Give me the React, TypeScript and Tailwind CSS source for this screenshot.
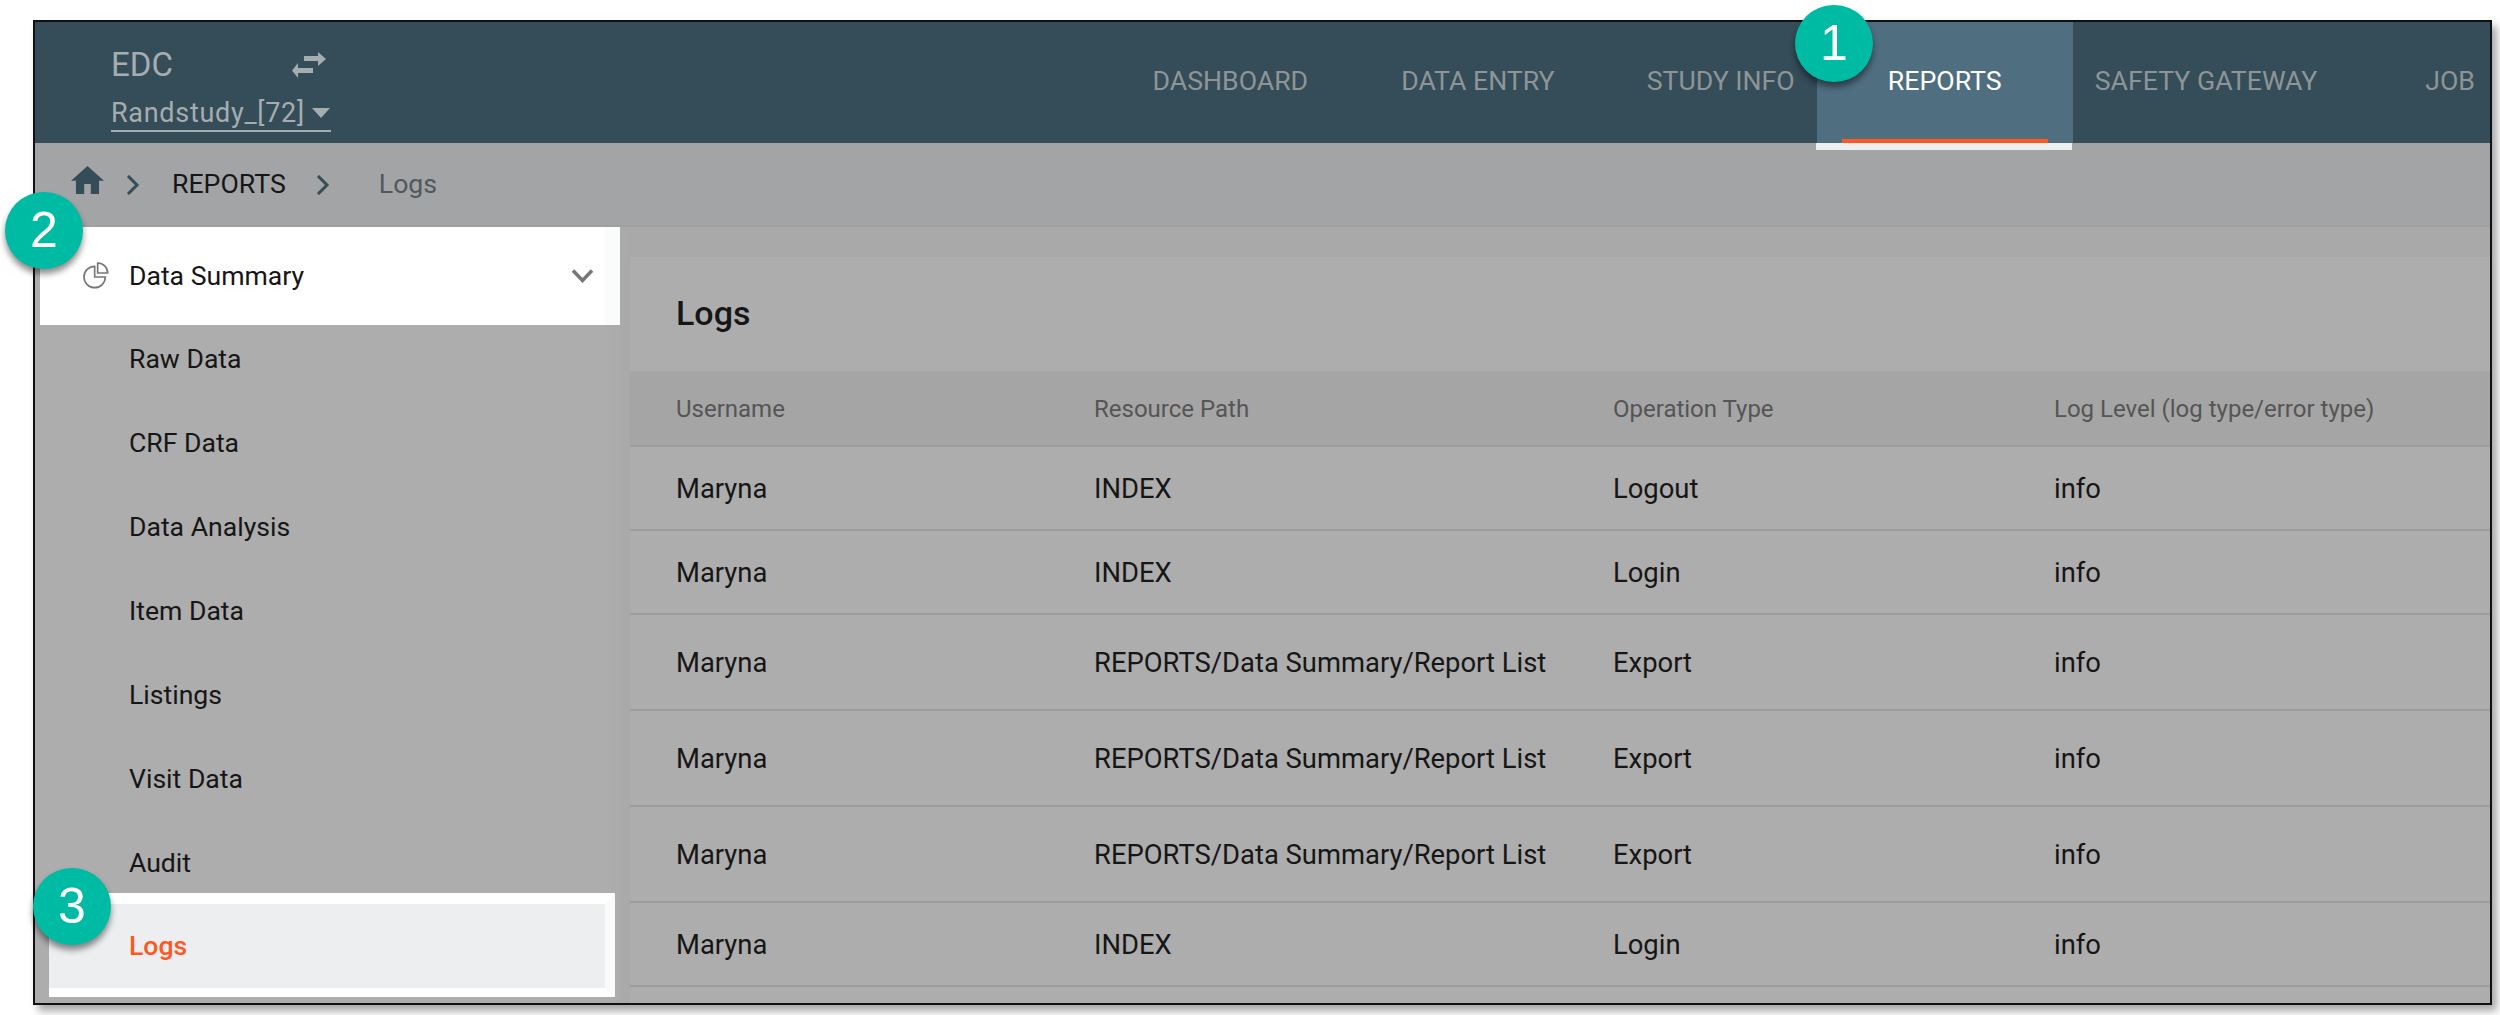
import type { ReactNode } from "react";

const navItems = [
  { label: "DASHBOARD", space: "mr-[93px]" },
  { label: "DATA ENTRY", space: "mr-[92px]" },
  { label: "STUDY INFO", space: "mr-[22px]" },
  { label: "REPORTS", space: "w-[256px] justify-center", active: true },
  { label: "SAFETY GATEWAY", space: "ml-[22px] mr-[108px]" },
  { label: "JOB", space: "mr-[15px]" },
];

const sideItems = ["Raw Data", "CRF Data", "Data Analysis", "Item Data", "Listings", "Visit Data", "Audit"];

const rows = [
  { op: "Logout", path: "INDEX", h: "h-[84px]" },
  { op: "Login", path: "INDEX", h: "h-[84px]" },
  { op: "Export", path: "REPORTS/Data Summary/Report List", h: "h-[96px]" },
  { op: "Export", path: "REPORTS/Data Summary/Report List", h: "h-[96px]" },
  { op: "Export", path: "REPORTS/Data Summary/Report List", h: "h-[96px]" },
  { op: "Login", path: "INDEX", h: "h-[84px]" },
  { op: "", path: "", h: "h-[40px]" },
];

function Badge({ n, className }: { n: number; className: string }) {
  return (
    <div
      className={`absolute z-10 flex h-[77px] w-[78px] items-center justify-center rounded-full bg-[#00bba4] text-[50px] text-white shadow-[0_5px_6px_rgba(0,0,0,0.45)] font-['Liberation_Sans',sans-serif] ${className}`}
    >
      {n}
    </div>
  );
}

function Cell({ className, children }: { className: string; children: ReactNode }) {
  return <div className={`shrink-0 ${className}`}>{children}</div>;
}

function Chevron({ className }: { className: string }) {
  return (
    <svg viewBox="0 0 14 20" className={`h-[20px] w-[14px] ${className}`} fill="none" stroke="#354c59" strokeWidth="3">
      <path d="M2 1l9 9-9 9" />
    </svg>
  );
}

export default function App() {
  return (
    <div className="relative h-[1015px] w-[2500px] overflow-hidden bg-white pt-[20px] pl-[33px] font-['Roboto',sans-serif]">
      <Badge n={1} className="left-[1795px] top-[5px]" />
      <Badge n={2} className="left-[5px] top-[192px]" />
      <Badge n={3} className="left-[33px] top-[868px]" />

      <div className="flex h-[985px] w-[2459px] flex-col overflow-hidden border-2 border-[#111] bg-[#a9a9a9] shadow-[5px_6px_8px_rgba(0,0,0,0.35)]">
        {/* top bar */}
        <header className="flex h-[121px] shrink-0 items-stretch justify-between bg-[#354c59] pl-[76px]">
          <div className="flex flex-col pt-[23px] text-[#a6adb0]">
            <div className="flex w-[217px] items-center justify-between pr-[1px]">
              <span className="text-[33px] leading-[40px]">EDC</span>
              <svg viewBox="0 0 36 28" className="h-[28px] w-[36px]" fill="#a6adb0">
                <path d="M13 5h14V1l8 7-8 7v-5H13z" />
                <path d="M22 17H7v-5l-6 7.500 6 7.500v-5h15z" />
              </svg>
            </div>
            <div className="mt-[11px] flex w-[220px] items-center gap-[7px] border-b-2 border-[#a6adb0] text-[27px] leading-[34px] tracking-[0.7px]">
              <span>Randstudy_[72]</span>
              <svg viewBox="0 0 18 10" className="h-[10px] w-[18px]" fill="#a6adb0">
                <path d="M0 0h18L9 10z" />
              </svg>
            </div>
          </div>
          <nav className="flex items-stretch">
            {navItems.map((item) => (
              <div
                key={item.label}
                className={`relative flex items-start pt-[41px] text-[26.7px] leading-[36px] ${item.space} ${
                  item.active ? "bg-[#4f6e80] text-white" : "text-[#8e9597]"
                }`}
              >
                {item.label}
                {item.active && (
                  <div className="absolute bottom-0 left-[25px] right-[25px] h-[4px] bg-[#ff5722]" />
                )}
              </div>
            ))}
          </nav>
        </header>

        {/* breadcrumb */}
        <div className="relative flex h-[84px] shrink-0 items-center border-b-2 border-[#a0a0a0] bg-[#a3a4a6] pt-[1px] pl-[36px] text-[26.7px]">
          <div className="absolute left-[1781px] top-0 h-[7px] w-[256px] bg-[#edeef0]" />
          <svg viewBox="2 3 20 17" className="-mt-[10px] h-[28px] w-[33px]" fill="#354c59">
            <path d="M10 20v-6h4v6h5v-8h3L12 3 2 12h3v8z" />
          </svg>
          <Chevron className="ml-[22px]" />
          <span className="ml-[32px] text-[#161616]">REPORTS</span>
          <Chevron className="ml-[30px]" />
          <span className="ml-[49px] text-[#52595d]">Logs</span>
        </div>

        <div className="flex min-h-0 flex-1 items-stretch">
          {/* side menu */}
          <aside className="w-[595px] shrink-0 bg-[linear-gradient(to_right,#adadad_570px,#a9a9a9)] text-[26.6px] text-[#161616]">
            <div className="ml-[5px] flex h-[98px] w-[580px] items-center justify-between border-r-[15px] border-[#fafbfb] bg-white pl-[43px] pr-[10px]">
              <div className="flex items-center gap-[20px]">
                <svg viewBox="0 0 78 81" className="h-[27px] w-[26px]" fill="none" stroke="#777" strokeWidth="5">
                  <path d="M35 13A32 32 0 1 0 67 45H35z" />
                  <path d="M44 3A30 30 0 0 1 74 33H44z" />
                </svg>
                <span>Data Summary</span>
              </div>
              <svg viewBox="0 0 22 14" className="h-[14px] w-[25px]" fill="none" stroke="#777" strokeWidth="3.500">
                <path d="M1.500 1.500L11 11.500l9.500-10" />
              </svg>
            </div>
            <div className="-mt-[8px]">
              {sideItems.map((item) => (
                <div key={item} className="flex h-[84px] items-center pl-[94px]">
                  {item}
                </div>
              ))}
            </div>
            <div className="ml-[14px] -mt-[12px] h-[104px] w-[566px] border-t-[11px] border-r-[10px] border-b-[9px] border-t-white border-r-[#f9fafa] border-b-white bg-[#edeef0]">
              <div className="flex h-full items-center pl-[80px] font-medium text-[#ff5722]">Logs</div>
            </div>
          </aside>

          {/* log table */}
          <main className="min-w-0 flex-1 pt-[30px]">
            <div className="h-full bg-[#adadad]">
              <h1 className="flex h-[114px] items-center pb-[2px] pl-[46px] text-[34px] font-medium text-[#161616]">Logs</h1>
              <div className="flex h-[76px] items-center border-b-2 border-[#9c9c9c] bg-[#a5a5a5] pt-[2px] pl-[46px] text-[24px] text-[#555]">
                <Cell className="w-[418px]">Username</Cell>
                <Cell className="w-[519px]">Resource Path</Cell>
                <Cell className="w-[441px]">Operation Type</Cell>
                <Cell className="w-[500px]">Log Level (log type/error type)</Cell>
              </div>
              {rows.map((row, i) => (
                <div
                  key={i}
                  className={`flex items-center border-b-2 border-[#9c9c9c] pt-[4px] pl-[46px] text-[27.4px] text-[#161616] ${row.h}`}
                >
                  {row.op && (
                    <>
                      <Cell className="w-[418px]">Maryna</Cell>
                      <Cell className="w-[519px]">{row.path}</Cell>
                      <Cell className="w-[441px]">{row.op}</Cell>
                      <Cell className="w-[500px]">info</Cell>
                    </>
                  )}
                </div>
              ))}
            </div>
          </main>
        </div>
      </div>
    </div>
  );
}
